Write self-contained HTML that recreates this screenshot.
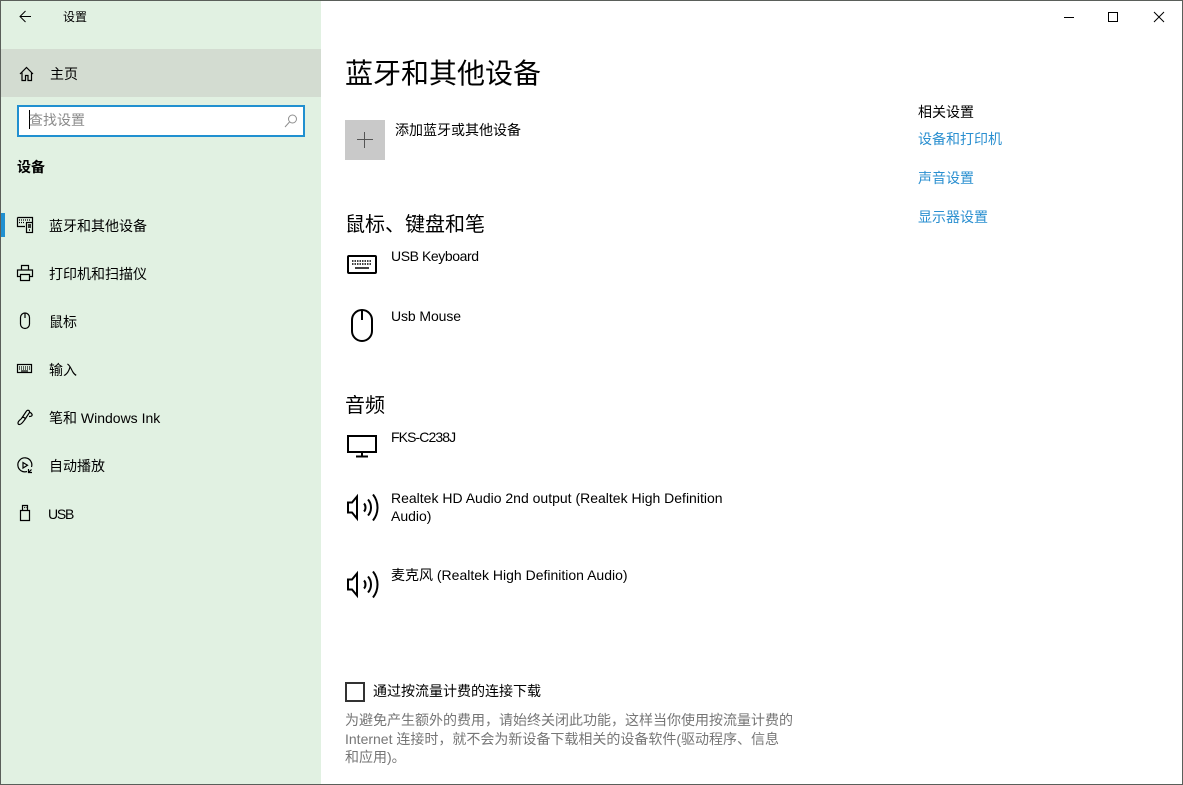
<!DOCTYPE html>
<html lang="zh"><head><meta charset="utf-8"><title>设置</title>
<style>
html,body{margin:0;padding:0;width:1183px;height:785px;overflow:hidden;background:#fff}
body{position:relative;font-family:"Liberation Sans","Noto Sans CJK SC",sans-serif;font-size:14px;color:#000}
.t{position:absolute;white-space:nowrap;line-height:20px}
.l{color:#2a8fd0}
.g{color:#767676}
.b{position:absolute;background:#5a5f5a}
svg{position:absolute;overflow:visible;fill:none;stroke:#000;stroke-width:1}
.s{stroke-width:1.2}
.h{font-size:20px;line-height:28px}
</style></head><body>
<div style="position:absolute;left:1px;top:1px;width:320px;height:783px;background:#e1f1e2"></div>
<div style="position:absolute;left:1px;top:49px;width:320px;height:48px;background:#d3dcd1"></div>
<div class="b" style="left:0;top:0;width:1183px;height:1px"></div>
<div class="b" style="left:0;top:0;width:1px;height:785px"></div>
<div class="b" style="left:1182px;top:0;width:1px;height:785px"></div>
<div class="b" style="left:0;top:784px;width:1183px;height:1px"></div>

<svg style="left:19px;top:10px" width="13" height="13"><path d="M12 6.5H1M6.5 1L1 6.5L6.5 12"/></svg>
<div class="t" style="left:63px;top:7px;font-size:12px">设置</div>

<svg class="s" style="left:19px;top:66px" width="16" height="16"><path d="M1 8L7.500 1.500L14 8M3 6.500V14.500H6.500V9.500H9V14.500H12.500V6.500"/></svg>
<div class="t" style="left:50px;top:64px">主页</div>

<div style="position:absolute;left:17px;top:105px;width:288px;height:32px;box-sizing:border-box;border:2px solid #2090d0;background:#fff"></div>
<div style="position:absolute;left:29px;top:110px;width:1px;height:19px;background:#000"></div>
<div class="t" style="left:29px;top:110px;color:#8a8a8a">查找设置</div>
<svg style="left:284px;top:114px;stroke:#8f8f8f" width="14" height="14"><circle cx="8.500" cy="5" r="4"/><path d="M5.500 8L1 13"/></svg>
<div class="t" style="left:17px;top:157px;font-weight:bold">设备</div>

<div style="position:absolute;left:1px;top:213px;width:4px;height:24px;background:#2090d0"></div>
<svg class="s" style="left:17px;top:217px" width="16" height="16"><path d="M.5.5H15.5V5M.5.5V9.500H8"/><path d="M2 3H14M2 5.500H8" stroke-dasharray="1 1"/><rect x="9.500" y="5.500" width="6" height="10" fill="#e1f1e2"/><path d="M11 8H14M11 10H14M12 13H13" stroke-width="1.500"/></svg>
<div class="t" style="left:49px;top:216px">蓝牙和其他设备</div>

<svg class="s" style="left:17px;top:265px" width="16" height="16"><path d="M4.500 5V.5H11.500V5M3.500 11.500H.5V5H15.500V11.500H12.500M3.500 9.500H12.500V15.500H3.500Z"/></svg>
<div class="t" style="left:49px;top:264px">打印机和扫描仪</div>

<svg class="s" style="left:20px;top:313px" width="10" height="16"><path d="M.5 4.500A4 4 0 0 1 9.500 4.500V11A4.500 4.500 0 0 1 .5 11ZM5 .5V5"/></svg>
<div class="t" style="left:49px;top:312px">鼠标</div>

<svg class="s" style="left:17px;top:364px" width="15" height="10"><rect x=".5" y=".5" width="14" height="8"/><path d="M2 3H13M2 5H13" stroke-dasharray="1 1"/><path d="M4 7H11"/></svg>
<div class="t" style="left:49px;top:360px">输入</div>

<svg class="s" style="left:17px;top:409px" width="17" height="17"><path d="M1 14C1 12 3 11 4.500 9.500L9.500 2C11 .5 13 1.500 12.500 3.500L7.500 11C6 13 4.500 15.500 2.500 15.500C1.500 15.500 1 15 1 14ZM12.500 3.500C14 3.500 15.500 5 15 6.500C14.500 7.500 13 7.500 12 7.500M5.500 7.500L9 10"/></svg>
<div class="t" style="left:49px;top:408px">笔和 Windows Ink</div>

<svg class="s" style="left:17px;top:457px" width="16" height="17"><path d="M10 14.500A7 7 0 1 1 14.500 10M6 5.500V11L10.500 8.200ZM14.500 12.500L11.500 15.500M11.500 12V15.500H15"/></svg>
<div class="t" style="left:49px;top:456px">自动播放</div>

<svg class="s" style="left:20px;top:505px" width="10" height="16"><path d="M2.500 5V.5H7.500V5M.5 5.500H9.500V15.500H.5ZM4 2.500H4.800M5.800 2.500H6.500"/></svg>
<div class="t" style="left:48px;top:504px;letter-spacing:-1.200px">USB</div>

<svg style="left:1064px;top:17px" width="11" height="1"><path d="M0 .5H10"/></svg>
<svg style="left:1108px;top:12px" width="10" height="10"><rect x=".5" y=".5" width="9" height="9"/></svg>
<svg style="left:1154px;top:12px" width="10" height="10"><path d="M0 0L10 10M10 0L0 10"/></svg>

<div class="t" style="left:345px;top:55px;font-size:28px;line-height:38px">蓝牙和其他设备</div>

<div style="position:absolute;left:345px;top:120px;width:40px;height:40px;background:#c9c9c9"></div>
<svg style="left:357px;top:132px;stroke:#555" width="16" height="16"><path d="M7.500 0V16M0 7.500H16"/></svg>
<div class="t" style="left:395px;top:120px">添加蓝牙或其他设备</div>

<div class="t h" style="left:345px;top:211px">鼠标、键盘和笔</div>

<svg style="left:347px;top:255px;stroke-width:2" width="30" height="19"><rect x="1" y="1" width="28" height="17" rx="1"/><path d="M5 6H25M5 9H25" stroke-width="1.500" stroke-dasharray="1.500 1"/><path d="M8 13H22" stroke-width="1.500"/></svg>
<div class="t" style="left:391px;top:246px;letter-spacing:-.42px">USB Keyboard</div>

<svg style="left:351px;top:309px;stroke-width:2" width="22" height="33"><path d="M1 11A10 10 0 0 1 21 11V22A10 10 0 0 1 1 22ZM11 1V11"/></svg>
<div class="t" style="left:391px;top:306px;letter-spacing:-.1px">Usb Mouse</div>

<div class="t h" style="left:345px;top:392px">音频</div>

<svg style="left:347px;top:435px;stroke-width:2" width="30" height="23"><rect x="1" y="1" width="28" height="16"/><path d="M15 18V21M9 21.500H21"/></svg>
<div class="t" style="left:391px;top:427px;letter-spacing:-.9px">FKS-C238J</div>

<svg style="left:347px;top:493px;stroke-width:2" width="33" height="29"><path d="M1 9.500H5L10 3.500V25.500L5 19.500H1ZM17 10.500C19 12.500 19 16.500 17 18.500M21 6.500C25 11 25 18 21 22.500M26 1.500C32 9 32 20 26 27.500"/></svg>
<div class="t" style="left:391px;top:489px;line-height:18px;white-space:normal;width:345px">Realtek HD Audio 2nd output (Realtek High Definition Audio)</div>

<svg style="left:347px;top:570px;stroke-width:2" width="33" height="29"><path d="M1 9.500H5L10 3.500V25.500L5 19.500H1ZM17 10.500C19 12.500 19 16.500 17 18.500M21 6.500C25 11 25 18 21 22.500M26 1.500C32 9 32 20 26 27.500"/></svg>
<div class="t" style="left:391px;top:565px">麦克风 (Realtek High Definition Audio)</div>

<div style="position:absolute;left:345px;top:682px;width:20px;height:20px;box-sizing:border-box;border:2px solid #333"></div>
<div class="t" style="left:373px;top:681px">通过按流量计费的连接下载</div>
<div class="t g" style="left:345px;top:710px">为避免产生额外的费用，请始终关闭此功能，这样当你使用按流量计费的</div>
<div class="t g" style="left:345px;top:729px">Internet 连接时，就不会为新设备下载相关的设备软件(驱动程序、信息</div>
<div class="t g" style="left:345px;top:747px">和应用)。</div>

<div class="t" style="left:918px;top:102px">相关设置</div>
<div class="t l" style="left:918px;top:129px">设备和打印机</div>
<div class="t l" style="left:918px;top:168px">声音设置</div>
<div class="t l" style="left:918px;top:207px">显示器设置</div>
</body></html>
